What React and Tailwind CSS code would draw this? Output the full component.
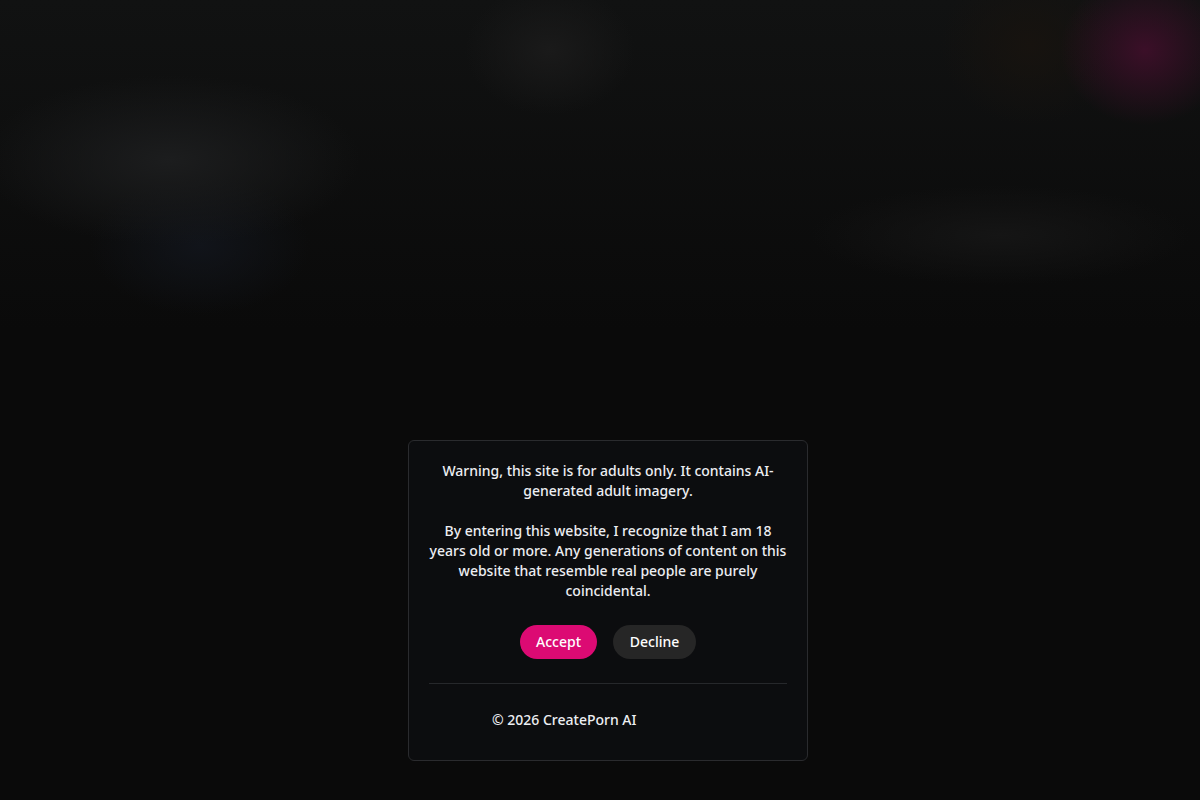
import React from "react";

const App = () => {
  return (
    <div
      className="w-full h-[800px] overflow-hidden bg-[#0a0a0a] bg-[radial-gradient(ellipse_190px_85px_at_170px_160px,#1c1d1e,transparent),radial-gradient(ellipse_110px_70px_at_200px_245px,#11141a,transparent),radial-gradient(ellipse_85px_65px_at_550px_50px,#1a1a1a,transparent),radial-gradient(ellipse_85px_75px_at_1145px_50px,#3b0f28,transparent),radial-gradient(ellipse_90px_80px_at_1030px_45px,#17130f,transparent),radial-gradient(ellipse_190px_50px_at_1000px_235px,#151515,transparent),linear-gradient(to_bottom,#111212,#0a0a0a_330px)] flex items-end justify-center"
      style={{ fontFamily: '"Noto Sans", "Open Sans", sans-serif' }}
    >
      {/* AGE GATE */}
      <div className="mb-[39px] ml-[16px] w-[400px] h-[321px] rounded-md border border-[#2a2b2e] bg-[#0c0d0f] px-5 pt-5 text-[14px] leading-5 font-medium text-[#eceef2]">
        <p className="text-center">
          Warning, this site is for adults only. It contains AI-generated adult imagery.
        </p>
        <p className="mt-5 text-center">
          By entering this website, I recognize that I am 18 years old or more. Any generations of content on this website that resemble real people are purely coincidental.
        </p>
        <div className="mt-6 flex justify-center gap-4">
          <button className="h-[34px] w-[77px] rounded-full bg-[#dc0a73] text-white">
            Accept
          </button>
          <button className="h-[34px] w-[83px] rounded-full bg-[#262626] text-white">
            Decline
          </button>
        </div>
        <div className="mt-6 border-t border-[#26282b]" />
        <div className="mt-[26px] pl-[63px]">© 2026 CreatePorn AI</div>
      </div>
    </div>
  );
};

export default App;
